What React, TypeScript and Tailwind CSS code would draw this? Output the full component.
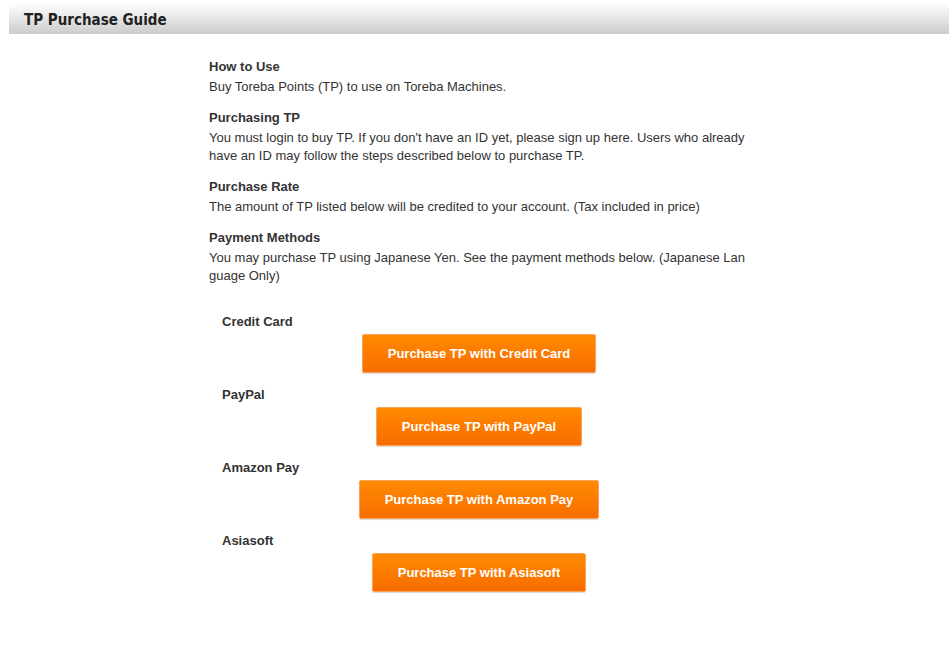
import React from "react";

const sections = [
  { h: "How to Use", b: "Buy Toreba Points (TP) to use on Toreba Machines." },
  {
    h: "Purchasing TP",
    b: "You must login to buy TP. If you don't have an ID yet, please sign up here. Users who already have an ID may follow the steps described below to purchase TP.",
  },
  { h: "Purchase Rate", b: "The amount of TP listed below will be credited to your account. (Tax included in price)" },
  {
    h: "Payment Methods",
    b: "You may purchase TP using Japanese Yen. See the payment methods below. (Japanese Language Only)",
  },
];

const methods = ["Credit Card", "PayPal", "Amazon Pay", "Asiasoft"];

export default function App() {
  return (
    <div className="w-[949px] h-[662px] bg-white text-[#333]" style={{ fontFamily: '"Liberation Sans", Arial, sans-serif' }}>
      <div className="pt-[3px] pl-[9px]">
        <div className="h-[31px] bg-gradient-to-b from-[#ffffff] to-[#cccccc] flex items-center pl-[15px] pt-[3px]">
          <span
            className="text-[15px] font-bold text-[#222] tracking-[0px]"
            style={{ fontFamily: '"DejaVu Sans Condensed", "DejaVu Sans", sans-serif', fontStretch: "condensed" }}
          >
            TP Purchase Guide
          </span>
        </div>
      </div>
      <div className="ml-[209px] w-[540px] pt-[22px] text-[13px] leading-[18px]">
        {sections.map((s) => (
          <div key={s.h} className="mb-[11px]">
            <div className="font-bold text-[13px] leading-[22px]">{s.h}</div>
            <div className="break-all">{s.b}</div>
          </div>
        ))}
        <div className="pt-[16px]">
          {methods.map((m) => (
            <div key={m} className="mb-[12px]">
              <div className="pl-[13px] font-bold text-[13px] leading-[20px]">{m}</div>
              <div className="flex justify-center mt-[2px]">
                <button className="h-[39px] px-[25px] rounded-[2px] bg-gradient-to-b from-[#ff8a00] to-[#f86c00] border border-[#fba35a] text-white font-bold text-[13px] shadow-[0_1px_1px_rgba(0,0,0,0.15)]">
                  Purchase TP with {m}
                </button>
              </div>
            </div>
          ))}
        </div>
      </div>
    </div>
  );
}
